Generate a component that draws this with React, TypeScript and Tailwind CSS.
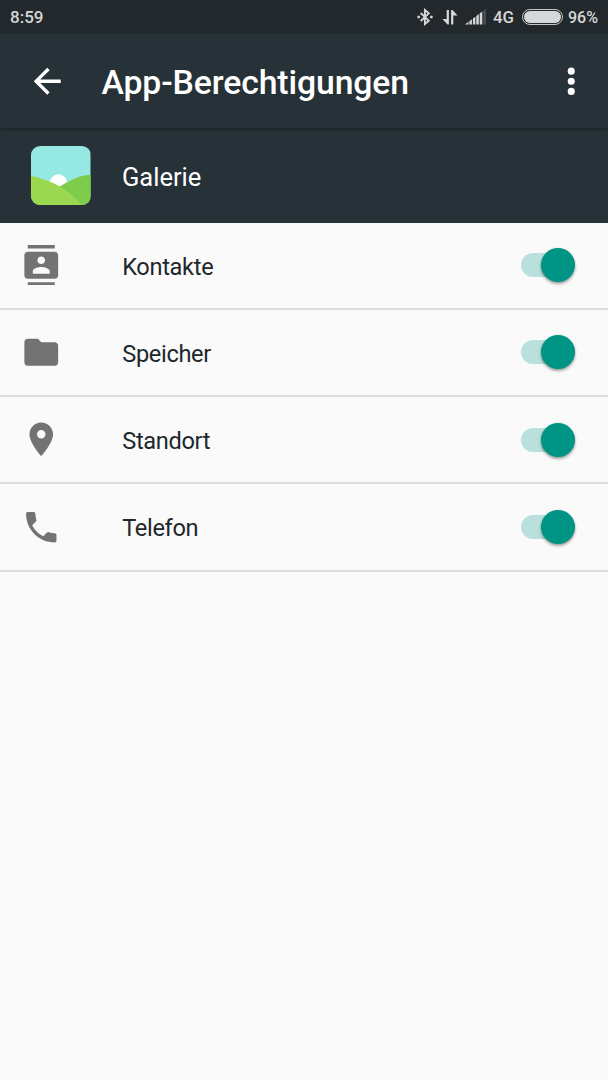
import type { ReactNode } from "react";

function Icon({ children, className }: { children: ReactNode; className: string }) {
  return (
    <svg viewBox="0 0 24 24" fill="currentColor" className={className}>
      {children}
    </svg>
  );
}

const permissions = [
  {
    label: "Kontakte",
    path: "M20 0H4v2h16V0zM4 24h16v-2H4v2zM20 4H4c-1.1 0-2 .9-2 2v12c0 1.1.9 2 2 2h16c1.1 0 2-.9 2-2V6c0-1.1-.9-2-2-2zm-8 2.750c1.240 0 2.250 1.010 2.250 2.250s-1.010 2.250-2.250 2.250S9.750 10.240 9.750 9 10.760 6.750 12 6.750zM17 17H7v-1.500c0-1.670 3.330-2.500 5-2.500s5 .830 5 2.500V17z",
  },
  {
    label: "Speicher",
    path: "M10 4H4c-1.100 0-1.990.900-1.990 2L2 18c0 1.100.900 2 2 2h16c1.100 0 2-.900 2-2V8c0-1.100-.900-2-2-2h-8l-2-2z",
  },
  {
    label: "Standort",
    path: "M12 2C8.130 2 5 5.130 5 9c0 5.250 7 13 7 13s7-7.750 7-13c0-3.870-3.130-7-7-7zm0 9.500c-1.380 0-2.500-1.120-2.500-2.500s1.120-2.500 2.500-2.500 2.500 1.120 2.500 2.500-1.120 2.500-2.500 2.500z",
  },
  {
    label: "Telefon",
    path: "M6.620 10.790c1.440 2.830 3.760 5.140 6.590 6.590l2.200-2.200c.270-.270.670-.360 1.020-.240 1.120.370 2.330.570 3.570.570.550 0 1 .450 1 1V20c0 .550-.450 1-1 1-9.390 0-17-7.610-17-17 0-.550.450-1 1-1h3.500c.550 0 1 .450 1 1 0 1.250.200 2.450.570 3.570.110.350.030.740-.250 1.020l-2.200 2.200z",
  },
];

function StatusBar() {
  return (
    <header className="flex h-[34px] items-center bg-[#22282b] pl-[10px] pr-[10px] text-[16.500px] font-medium text-[#d5d7d8]">
      <span className="mt-[1px] grow text-[17px]">8:59</span>
      <svg viewBox="0 0 16 18" className="mr-[9px] h-[18px] w-[16px]" fill="none" stroke="currentColor" strokeWidth="1.9">
        <path d="M3.700 5 11.800 12.600 7.900 16V2l3.900 3.400L3.700 13" />
        <path d="M0.400 9h2.500M13.100 9h2.500" strokeWidth="2.500" />
      </svg>
      <svg viewBox="0 0 16 16" className="mr-[7px] h-[16px] w-[16px]" fill="currentColor">
        <path d="M4.700 1h2.200v14.500H5.500L0.500 10h4.200zM11.300 15.500H9.100V1h1.400L15.500 6.400h-4.200z" />
      </svg>
      <svg viewBox="0 0 22 16" className="mr-[6px] h-[16px] w-[22px]" fill="currentColor">
        <path d="M0 15.500 3.500 12.800V15.500zM4.400 12.200 6.900 10.300v5.200H4.400zM7.900 9.600 10.400 7.700v7.800H7.900zM11.300 7 13.800 5.100v10.400h-2.500zM14.700 4.400 17.300 2.500v13h-2.600z" />
        <path d="M18.500 1.600 20.800 0v15.500h-2.300z" opacity=".25" />
      </svg>
      <span className="mr-[8px] mt-[2px] w-[21px] whitespace-nowrap text-[16.800px]">4G</span>
      <span className="mr-[5px] flex h-[16px] w-[41px] rounded-full border border-[#c2c5c6] p-px">
        <span className="grow rounded-full bg-[#d5d7d8]" />
      </span>
      <span className="mt-[1px] w-[30px] whitespace-nowrap text-[16px]">96%</span>
    </header>
  );
}

function GalleryIcon() {
  return (
    <svg viewBox="0 0 60 60" className="h-[59.500px] w-[59.500px] rounded-[9px]">
      <rect width="60" height="60" fill="#96e8e2" />
      <circle cx="27.700" cy="37.400" r="8.800" fill="#fff" />
      <path d="M27 42C37 36 47 30 60 29V60H27z" fill="#7fcb4b" />
      <path d="M0 30C22 35 39 44 51 60H0z" fill="#9bd850" />
    </svg>
  );
}

function Toggle() {
  return (
    <span role="switch" aria-checked="true" className="flex h-[24px] w-[54px] items-center justify-end rounded-full bg-linear-to-r from-[#b9e0dc] from-80% to-transparent to-80%">
      <span className="h-[34px] w-[34px] shrink-0 rounded-full bg-[#009485] shadow-[0_2px_3px_rgba(0,0,0,0.35),0_0_2px_rgba(0,0,0,0.12)]" />
    </span>
  );
}

export default function App() {
  return (
    <div className="flex h-[1080px] w-[608px] flex-col overflow-hidden bg-[#fafafa] font-['Roboto',sans-serif]">
      <StatusBar />
      <div className="flex h-[94px] items-center bg-[#273238] pl-[27px] pr-[17px] text-white">
        <Icon className="h-[40.500px] w-[40.500px]">
          <path d="M20 11H7.830l5.590-5.590L12 4l-8 8 8 8 1.410-1.410L7.830 13H20v-2z" />
        </Icon>
        <h1 className="ml-[34px] mt-[3px] grow text-[33.750px] leading-[40px] font-medium tracking-[-0.11px]">App-Berechtigungen</h1>
        <Icon className="h-[40.500px] w-[40.500px]">
          <circle cx="12" cy="6" r="2.100" />
          <circle cx="12" cy="12" r="2.100" />
          <circle cx="12" cy="18" r="2.100" />
        </Icon>
      </div>
      <div className="flex h-[94.600px] items-center bg-[#273238] pl-[31px] text-white shadow-[inset_0_4px_4px_-2px_rgba(0,0,0,0.3)]">
        <GalleryIcon />
        <span className="ml-[31.500px] mt-[3.500px] text-[25.500px] leading-[30px]">Galerie</span>
      </div>
      <main className="flex flex-col">
        {permissions.map(({ label, path }) => (
          <div key={label} className="flex h-[87.250px] items-center border-b-2 border-[#dedede] pl-[20.700px] pr-[33px]">
            <Icon className="h-[40.500px] w-[40.500px] text-[#737373]">
              <path d={path} />
            </Icon>
            <span className="ml-[61px] mt-[3px] grow text-[23.600px] leading-[28px] tracking-[-0.32px] text-[#1d272c]">{label}</span>
            <Toggle />
          </div>
        ))}
      </main>
    </div>
  );
}
